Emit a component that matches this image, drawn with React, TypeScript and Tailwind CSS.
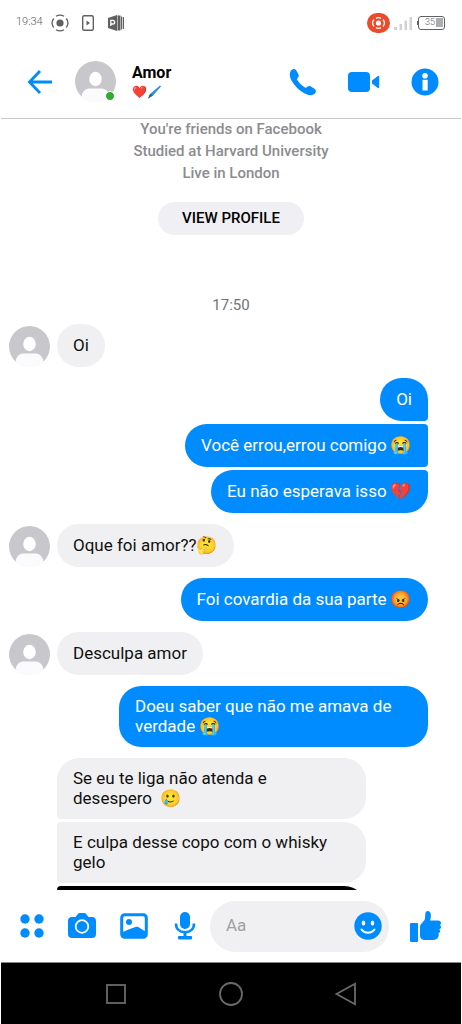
import React, { useState } from 'react';
import { clsx } from 'clsx';

type Message = { text: string; dark?: boolean };
type Group = { from: 'me' | 'them'; avatar?: boolean; messages: Message[] };

const groups: Group[] = [
  { from: 'them', avatar: true, messages: [{ text: 'Oi' }] },
  {
    from: 'me',
    messages: [
      { text: 'Oi' },
      { text: 'Você errou,errou comigo 😭' },
      { text: 'Eu não esperava isso 💔' },
    ],
  },
  { from: 'them', avatar: true, messages: [{ text: 'Oque foi amor??🤔' }] },
  { from: 'me', messages: [{ text: 'Foi covardia da sua parte 😡' }] },
  { from: 'them', avatar: true, messages: [{ text: 'Desculpa amor' }] },
  { from: 'me', messages: [{ text: 'Doeu saber que não me amava de verdade 😭' }] },
  {
    from: 'them',
    messages: [
      { text: 'Se eu te liga não atenda e desespero \u00a0🥲' },
      { text: 'E culpa desse copo com o whisky gelo' },
      { text: '', dark: true },
    ],
  },
];

function Avatar() {
  return (
    <svg viewBox="0 0 41 41" className="size-[41px] shrink-0" aria-hidden="true">
      <circle cx="20.5" cy="20.5" r="20.5" fill="#c8c8cc" />
      <ellipse cx="20.5" cy="18" rx="6.3" ry="7.2" fill="#fff" />
      <path d="M6.500 36C7 30 11 27.500 15 27.500H26C30 27.500 34 30 34.500 36A20.500 20.500 0 0 1 6.500 36Z" fill="#fbfbfe" />
    </svg>
  );
}

function StatusBar() {
  return (
    <div className="flex h-[45px] shrink-0 items-center justify-between pl-4 pr-[17px] text-[#606060]">
      <div className="flex items-center gap-2">
        <span className="text-[11px] font-light">19:34</span>
        <svg width="18" height="18" viewBox="0 0 18 18" fill="none" stroke="currentColor" strokeWidth="1.3">
          <circle cx="9" cy="9" r="3.600" fill="currentColor" stroke="none" />
          <path d="M5 2.300A7.800 7.800 0 0 1 13 2.300M5 15.700A7.800 7.800 0 0 0 13 15.700M2.700 4.500A7.500 7.500 0 0 0 2.700 13.500M15.300 4.500A7.500 7.500 0 0 1 15.300 13.500" />
        </svg>
        <svg width="22" height="18" viewBox="0 0 22 18" fill="none" stroke="currentColor" strokeWidth="1.400">
          <rect x="5.700" y="1.700" width="10.600" height="14.600" rx="1.500" />
          <path d="M9.500 6.500v5l3.500-2.500z" fill="currentColor" stroke="none" />
        </svg>
        <svg width="18" height="18" viewBox="0 0 18 18" fill="currentColor">
          <path d="M1 4l9-3v16l-9-3z" />
          <path d="M3.800 12V6.300h2a1.700 1.700 0 0 1 0 3.700h-2" fill="none" stroke="#fff" strokeWidth="1.300" />
          <path d="M10.500 1.500h3v15h-3zM14 2.500h1v13h-1zM15.700 3h1.300v12h-1.300z" />
        </svg>
      </div>
      <div className="flex items-center gap-1">
        <svg width="23" height="20" viewBox="0 0 23 20" fill="none" stroke="#fff" strokeWidth="1.300">
          <rect width="23" height="20" rx="10" fill="#ec4b2b" stroke="none" />
          <circle cx="11.500" cy="10" r="2.600" fill="#fff" stroke="none" />
          <path d="M9 5.300a5.400 5.400 0 0 1 5 0M9 14.700a5.400 5.400 0 0 0 5 0M7 6.500a5.500 5.500 0 0 0 0 7M16 6.500a5.500 5.500 0 0 1 0 7" />
        </svg>
        <svg width="19" height="14" viewBox="0 0 19 14" fill="#d2d2d2">
          <path d="M0 11h3v3H0zM5.500 8h2.500v6H5.500zM10.500 4.500h2.500v9.500h-2.500zM15.500 1H18v13h-2.500z" />
        </svg>
        <div className="flex items-center">
          <span className="h-1 w-px bg-[#606060]" />
          <span className="flex h-[14px] w-[27px] items-center justify-end gap-px rounded-[3px] border border-[#606060] pr-px text-[9px] font-light">
            35
            <span className="h-[9px] w-[7px] bg-[#adadad]" />
          </span>
        </div>
      </div>
    </div>
  );
}

function Header() {
  return (
    <header className="mx-px flex h-[74px] shrink-0 items-center border-b border-[#c9c9c9] pl-[26px] pr-[22px] text-[#008cff]">
      <button aria-label="Back">
        <svg width="26" height="26" viewBox="0 0 26 26" fill="none" stroke="currentColor" strokeWidth="2.800">
          <path d="M13 2L2.500 13 13 24M2.500 13H25" />
        </svg>
      </button>
      <div className="relative ml-[22px]">
        <Avatar />
        <span className="absolute bottom-px right-px size-[10px] rounded-full border border-white bg-[#31a935]" />
      </div>
      <div className="ml-4 flex-1">
        <h1 className="text-base font-bold leading-5 text-black">Amor</h1>
        <p className="flex items-center text-xs leading-[18px]">
          ❤️
          <svg width="14" height="14" viewBox="0 0 14 14" aria-hidden="true">
            <path d="M13 .5L14 1.500 6 10.500 1 13.500 3 9z" fill="#2f8fd8" />
            <path d="M3 9L6 10.500 1 13.500z" fill="#2a5f94" />
          </svg>
        </p>
      </div>
      <div className="flex items-center gap-[31px]">
        <button aria-label="Call">
          <svg width="28" height="28" viewBox="0 0 28 28" fill="currentColor">
            <path d="M2.500 2C4 .5 6.200.8 7.300 2.500l2 3.500c.8 1.500.5 2.800-.5 3.800-.8.800-.8 1.600-.2 2.600a24 24 0 0 0 6.800 6.800c1 .6 1.900.6 2.700-.2 1-1 2.400-1.200 3.800-.4l3.500 2.100c1.800 1.100 2 3.200.5 4.700-2.300 2.300-6 2.300-9.700.4A35 35 0 0 1 2.200 11.900C.4 8.200.2 4.300 2.500 2Z" />
          </svg>
        </button>
        <button aria-label="Video call">
          <svg width="32" height="22" viewBox="0 0 32 22" fill="currentColor">
            <rect y="1" width="22" height="20" rx="4" />
            <path d="M24 9.500l5.500-4.300c1-.7 1.700-.3 1.700.7v10.200c0 1-.7 1.400-1.700.7L24 12.500z" />
          </svg>
        </button>
        <button aria-label="Conversation info">
          <svg width="28" height="28" viewBox="0 0 28 28">
            <circle cx="14" cy="14" r="13.500" fill="currentColor" />
            <circle cx="14" cy="7.800" r="2.800" fill="#fff" />
            <path d="M11.500 11.800h5.200v10.700h-5.200z" fill="#fff" />
          </svg>
        </button>
      </div>
    </header>
  );
}

function MessageGroup({ group }: { group: Group }) {
  const mine = group.from === 'me';
  const last = group.messages.length - 1;

  return (
    <div className={clsx('flex items-end', mine ? 'justify-end pr-[34px]' : 'gap-[7px] pl-[9px]')}>
      {!mine && (group.avatar ? <Avatar /> : <div className="w-[41px] shrink-0" />)}
      <div className={clsx('flex max-w-[309px] flex-col gap-[3px]', mine ? 'items-end' : 'items-start')}>
        {group.messages.map((m, i) => (
          <div
            key={i}
            className={clsx(
              'flex min-h-[43px] items-center rounded-[22px] px-4 pb-[11px] pt-[10px] text-[17px] leading-5',
              mine ? 'bg-[#008cff] text-white' : m.dark ? 'w-full bg-black' : 'bg-[#f0f0f2] text-[#101010]',
              mine && i > 0 && 'rounded-tr-[4px]',
              mine && i < last && 'rounded-br-[4px]',
              !mine && i > 0 && 'rounded-tl-[4px]',
              !mine && i < last && 'rounded-bl-[4px]'
            )}
          >
            {m.text}
          </div>
        ))}
      </div>
    </div>
  );
}

function Composer() {
  const [draft, setDraft] = useState('');

  return (
    <form className="flex h-[72px] shrink-0 items-center pl-5 pr-[21px] text-[#008cff]" onSubmit={e => e.preventDefault()}>
      <div className="flex items-center gap-[23px]">
        <button type="button" aria-label="More">
          <svg width="24" height="24" viewBox="0 0 24 24" fill="currentColor">
            <circle cx="5" cy="5" r="4.700" />
            <circle cx="19" cy="5" r="4.700" />
            <circle cx="5" cy="19" r="4.700" />
            <circle cx="19" cy="19" r="4.700" />
          </svg>
        </button>
        <button type="button" aria-label="Camera">
          <svg width="30" height="28" viewBox="0 0 30 28">
            <path d="M5 5h3.500l2-2.500C11 1.500 11.500 1 13 1h4c1.500 0 2 .5 2.500 1.500l2 2.500H25c2.500 0 4 1.500 4 4v13c0 2.500-1.500 4-4 4H5c-2.500 0-4-1.500-4-4V9c0-2.500 1.500-4 4-4Z" fill="currentColor" />
            <circle cx="15" cy="14.500" r="6.300" fill="none" stroke="#fff" strokeWidth="1.800" />
          </svg>
        </button>
        <button type="button" aria-label="Photos">
          <svg width="28" height="28" viewBox="0 0 28 28" fill="currentColor">
            <rect x="1.700" y="2.700" width="24.600" height="22.600" rx="3" fill="none" stroke="currentColor" strokeWidth="3" />
            <circle cx="9" cy="10" r="3" />
            <path d="M3 20l5.500-2.500 7-2.500c1-.3 2-.2 3 .3l7 4.200V25H3z" />
          </svg>
        </button>
        <button type="button" aria-label="Voice message">
          <svg width="28" height="30" viewBox="0 0 28 30" fill="currentColor">
            <rect x="9" y="1" width="10" height="17" rx="5" />
            <path d="M5 12.500c0 5.500 3.500 8.700 9 8.700s9-3.200 9-8.700" fill="none" stroke="currentColor" strokeWidth="2.600" />
            <path d="M12.500 21h3v4h-3z" />
            <rect x="7" y="25" width="14" height="3.500" rx="1" />
          </svg>
        </button>
      </div>
      <div className="ml-[11px] flex h-[51px] min-w-0 flex-1 items-center rounded-full bg-[#f0f0f2] pl-4 pr-[7px]">
        <input
          type="text"
          aria-label="Message"
          placeholder="Aa"
          value={draft}
          onChange={e => setDraft(e.target.value)}
          className="min-w-0 flex-1 bg-transparent text-[17px] text-black outline-none placeholder:text-[#a0a0a0]"
        />
        <button type="button" aria-label="Emoji">
          <svg width="28" height="28" viewBox="0 0 28 28">
            <circle cx="14" cy="14" r="13.700" fill="currentColor" />
            <ellipse cx="9.500" cy="11" rx="1.800" ry="2.600" fill="#fff" />
            <ellipse cx="18.500" cy="11" rx="1.800" ry="2.600" fill="#fff" />
            <path d="M7.500 17.500c3 4.300 10 4.300 13 0" fill="none" stroke="#fff" strokeWidth="2" strokeLinecap="round" />
          </svg>
        </button>
      </div>
      <button type="button" aria-label="Like" className="ml-5">
        <svg width="32" height="32" viewBox="0 0 32 32" fill="currentColor">
          <rect x="1" y="13" width="8" height="19" rx="1" />
          <path d="M11 17c0-1.500.5-2.500 1.500-3.500l2.700-3c.5-.6.700-1.300.8-2.200l.4-5C16.600 1.700 17.500 1 18.800 1c1.900 0 3.100 1.700 3.100 4.500 0 1.900-.4 3.500-.9 5h8c1.900 0 3 1 3 2.500 0 1-.5 1.700-1.200 2.100.9.500 1.300 1.300 1.200 2.200-.1 1.100-.7 1.800-1.700 2.100.6.600.8 1.300.7 2.100-.2 1-.8 1.600-1.700 1.900.5.600.6 1.200.5 1.900-.4 3.200-2.500 4.700-6.300 4.700h-7c-4 0-5.500-1.500-5.500-5z" />
        </svg>
      </button>
    </form>
  );
}

function SystemNav() {
  return (
    <nav className="mx-px flex h-[62px] shrink-0 items-center justify-center gap-[91px] border-t border-[#8a8a8a] bg-black text-[#6a6a6a]">
      <button aria-label="Recent apps">
        <svg width="24" height="24" viewBox="0 0 24 24" fill="none" stroke="currentColor" strokeWidth="1.800">
          <rect x="3" y="3" width="18" height="18" />
        </svg>
      </button>
      <button aria-label="Home">
        <svg width="24" height="24" viewBox="0 0 24 24" fill="none" stroke="currentColor" strokeWidth="1.800">
          <circle cx="12" cy="12" r="11" />
        </svg>
      </button>
      <button aria-label="System back">
        <svg width="24" height="24" viewBox="0 0 24 24" fill="none" stroke="currentColor" strokeWidth="1.800">
          <path d="M21 1.800v20.400L2.500 12z" />
        </svg>
      </button>
    </nav>
  );
}

export default function App() {
  return (
    <div className="flex h-screen flex-col overflow-hidden bg-white font-[Roboto,'Noto_Color_Emoji',sans-serif]">
      <StatusBar />
      <Header />
      <main className="min-h-0 flex-1 overflow-hidden">
        <div className="-mt-px flex flex-col items-center">
          <p className="text-center text-[15px] font-medium leading-[22px] text-[#8c8c8f]">
            You're friends on Facebook
            <br />
            Studied at Harvard University
            <br />
            Live in London
          </p>
          <button className="mt-[18px] h-[33px] rounded-full bg-[#f0eff3] px-6 text-[15px] font-medium text-black">
            VIEW PROFILE
          </button>
          <time className="mt-[60px] text-[15px] leading-5 text-[#737373]">17:50</time>
        </div>
        <div className="mt-[9px] flex flex-col gap-[11px]">
          {groups.map((g, i) => (
            <MessageGroup key={i} group={g} />
          ))}
        </div>
      </main>
      <Composer />
      <SystemNav />
    </div>
  );
}
